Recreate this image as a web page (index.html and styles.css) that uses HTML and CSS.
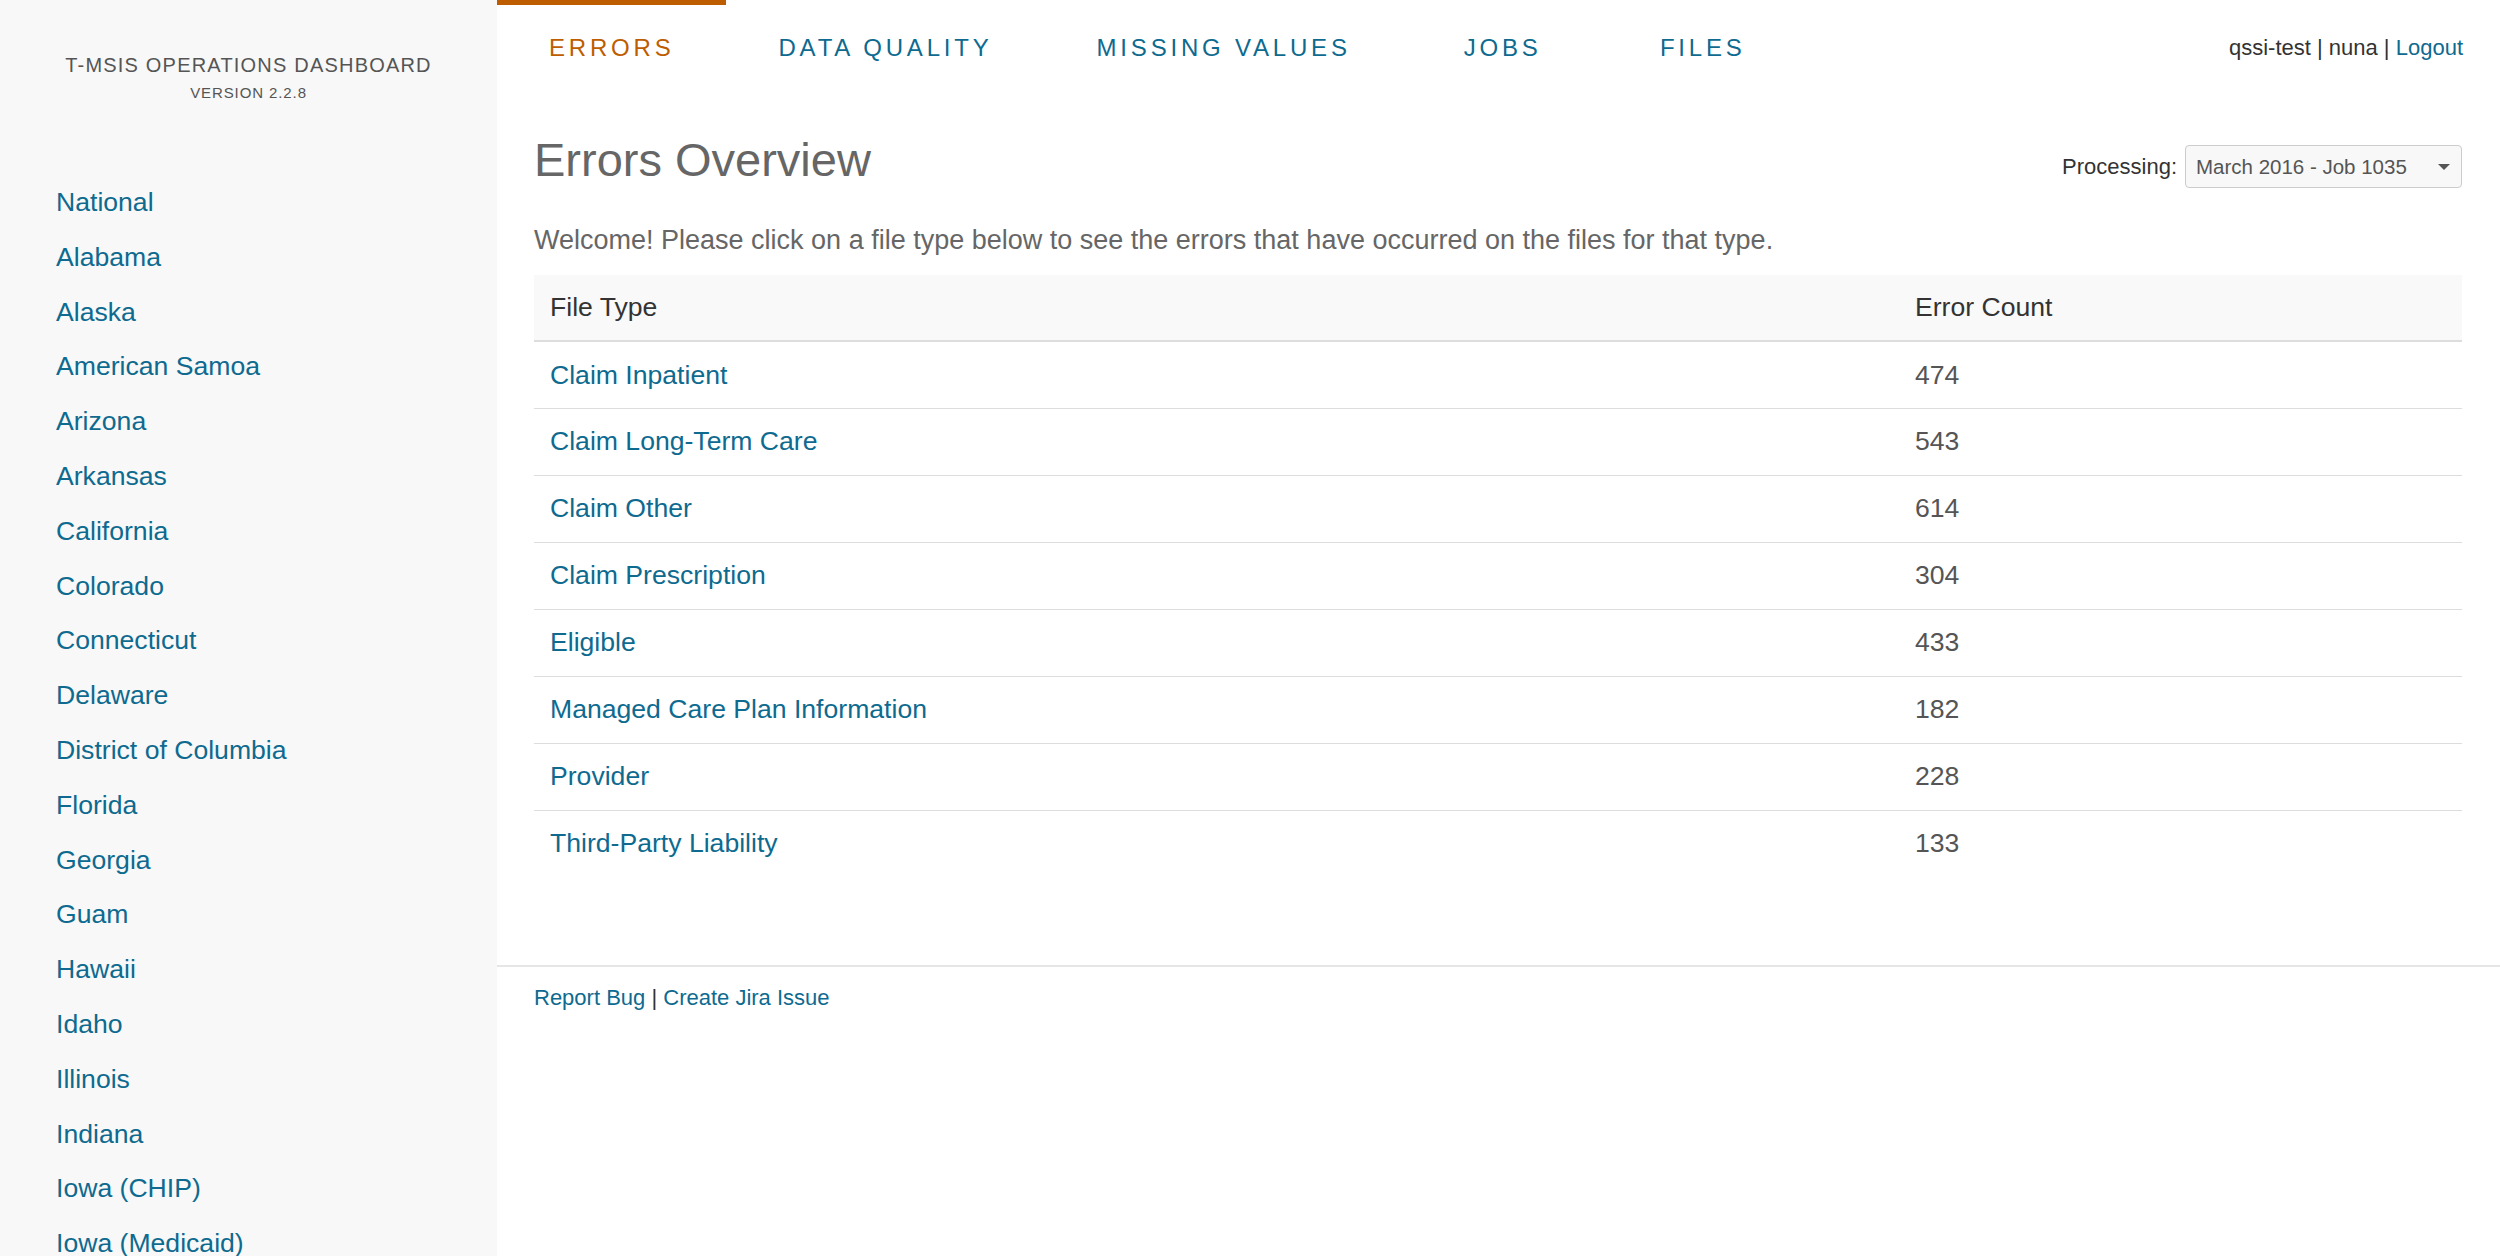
FILE: index.html
```html
<!DOCTYPE html>
<html lang="en">
<head>
<meta charset="utf-8">
<title>T-MSIS Operations Dashboard</title>
<link rel="stylesheet" href="styles.css">
</head>
<body>
<div class="app">
  <aside class="sidebar">
    <div class="brand">
      <div class="brand-title">T-MSIS OPERATIONS DASHBOARD</div>
      <div class="brand-version">VERSION 2.2.8</div>
    </div>
    <ul class="state-list">
      <li><a href="#">National</a></li>
      <li><a href="#">Alabama</a></li>
      <li><a href="#">Alaska</a></li>
      <li><a href="#">American Samoa</a></li>
      <li><a href="#">Arizona</a></li>
      <li><a href="#">Arkansas</a></li>
      <li><a href="#">California</a></li>
      <li><a href="#">Colorado</a></li>
      <li><a href="#">Connecticut</a></li>
      <li><a href="#">Delaware</a></li>
      <li><a href="#">District of Columbia</a></li>
      <li><a href="#">Florida</a></li>
      <li><a href="#">Georgia</a></li>
      <li><a href="#">Guam</a></li>
      <li><a href="#">Hawaii</a></li>
      <li><a href="#">Idaho</a></li>
      <li><a href="#">Illinois</a></li>
      <li><a href="#">Indiana</a></li>
      <li><a href="#">Iowa (CHIP)</a></li>
      <li><a href="#">Iowa (Medicaid)</a></li>
      <li><a href="#">Kansas</a></li>
      <li><a href="#">Kentucky</a></li>
    </ul>
  </aside>
  <div class="main">
    <header class="topbar">
      <nav class="tabs">
        <a class="tab active" href="#">ERRORS</a>
        <a class="tab" href="#">DATA QUALITY</a>
        <a class="tab" href="#">MISSING VALUES</a>
        <a class="tab" href="#">JOBS</a>
        <a class="tab" href="#">FILES</a>
      </nav>
      <div class="user">qssi-test | nuna | <a href="#">Logout</a></div>
    </header>
    <section class="content">
      <div class="page-head">
        <h1>Errors Overview</h1>
        <div class="processing">
          <span class="proc-label">Processing:</span>
          <div class="select">
            <span>March 2016 - Job 1035</span>
            <span class="caret"></span>
          </div>
        </div>
      </div>
      <p class="welcome">Welcome! Please click on a file type below to see the errors that have occurred on the files for that type.</p>
      <table class="errors">
        <thead>
          <tr><th class="col-type">File Type</th><th>Error Count</th></tr>
        </thead>
        <tbody>
          <tr><td><a href="#">Claim Inpatient</a></td><td>474</td></tr>
          <tr><td><a href="#">Claim Long-Term Care</a></td><td>543</td></tr>
          <tr><td><a href="#">Claim Other</a></td><td>614</td></tr>
          <tr><td><a href="#">Claim Prescription</a></td><td>304</td></tr>
          <tr><td><a href="#">Eligible</a></td><td>433</td></tr>
          <tr><td><a href="#">Managed Care Plan Information</a></td><td>182</td></tr>
          <tr><td><a href="#">Provider</a></td><td>228</td></tr>
          <tr><td><a href="#">Third-Party Liability</a></td><td>133</td></tr>
        </tbody>
      </table>
    </section>
    <footer class="footer">
      <a href="#">Report Bug</a> | <a href="#">Create Jira Issue</a>
    </footer>
  </div>
</div>
</body>
</html>
```
FILE: styles.css
```css
* { box-sizing: border-box; }
html, body { margin: 0; padding: 0; }
body {
  font-family: "Liberation Sans", Arial, Helvetica, sans-serif;
  color: #333;
  background: #fff;
  height: 1256px;
  overflow: hidden;
}
a { color: #0e6a8f; text-decoration: none; }

.app { display: flex; height: 1256px; }

.sidebar {
  width: 497px;
  flex: 0 0 497px;
  background: #f8f8f8;
  padding-top: 53px;
  overflow: hidden;
}
.brand { text-align: center; color: #555; }
.brand-title {
  font-size: 20px;
  line-height: 24px;
  letter-spacing: 1.2px;
}
.brand-version {
  font-size: 15px;
  line-height: 18px;
  letter-spacing: 0.9px;
  margin-top: 7px;
}
.state-list {
  list-style: none;
  margin: 73px 0 0 0;
  padding: 0 0 0 56px;
}
.state-list li {
  font-size: 26.6px;
  line-height: 54.8px;
  height: 54.8px;
}

.main { flex: 1; display: flex; flex-direction: column; min-width: 0; }

.topbar {
  height: 96px;
  display: flex;
  justify-content: space-between;
  align-items: stretch;
  padding-right: 37px;
}
.tabs { display: flex; }
.tab {
  display: flex;
  align-items: center;
  justify-content: center;
  min-width: 200px;
  padding: 0 52px 5px;
  border-top: 5px solid transparent;
  font-size: 24px;
  letter-spacing: 3.8px;
  color: #0e6a8f;
}
.tab.active { color: #be5d00; border-top-color: #be5d00; }
.user {
  display: flex;
  align-items: center;
  font-size: 22px;
  color: #333;
  white-space: pre;
}

.content { padding: 0 38px 0 37px; }
.page-head {
  display: flex;
  justify-content: space-between;
  align-items: flex-start;
  margin-top: 38px;
}
h1 {
  margin: 0;
  font-size: 47px;
  line-height: 52px;
  font-weight: normal;
  color: #666;
}
.processing {
  display: flex;
  align-items: center;
  margin-top: 11px;
  font-size: 22px;
  color: #333;
}
.proc-label { margin-right: 8px; }
.select {
  width: 277px;
  height: 43px;
  border: 1px solid #ccc;
  border-radius: 4px;
  background: #f8f8f8;
  display: flex;
  align-items: center;
  justify-content: space-between;
  padding: 0 11px 0 10px;
  color: #555;
  font-size: 20.5px;
}
.caret {
  width: 0; height: 0;
  border-left: 6px solid transparent;
  border-right: 6px solid transparent;
  border-top: 6px solid #555;
}
.welcome {
  margin: 34px 0 16px;
  font-size: 27px;
  line-height: 37px;
  color: #666;
}

.errors {
  width: 100%;
  border-collapse: collapse;
  font-size: 26.6px;
}
.errors th {
  text-align: left;
  font-weight: normal;
  color: #333;
  background: #f9f9f9;
  height: 66px;
  padding: 0 16px;
  border-bottom: 2px solid #ddd;
}
.errors .col-type { width: 70.8%; }
.errors td {
  height: 67px;
  padding: 0 16px;
  color: #555;
  border-top: 1px solid #ddd;
}
.errors tbody tr:first-child td { border-top: 0; height: 67px; padding-top: 1px; }

.footer {
  margin-top: 88px;
  border-top: 2px solid #e6e6e6;
  padding: 18px 37px;
  font-size: 22px;
  line-height: 26px;
  color: #333;
}
```
